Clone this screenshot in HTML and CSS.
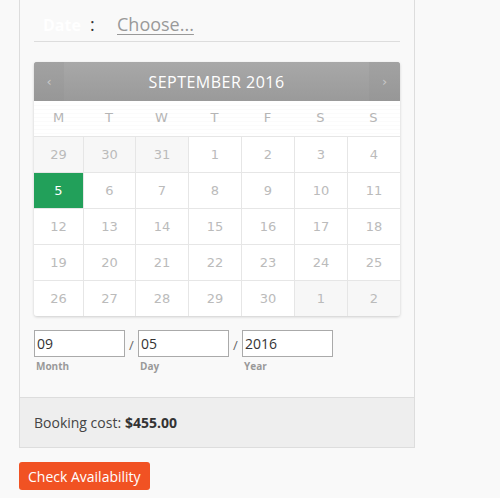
FILE: index.html
```html
<!DOCTYPE html>
<html>
<head>
<meta charset="utf-8">
<link rel="stylesheet" href="styles.css">
</head>
<body>
<div class="card">
  <div class="card-body">
    <div class="date-row">
      <span class="date-label">Date</span>
      <span class="colon">:</span>
      <a class="choose">Choose...</a>
    </div>
    <div class="calendar">
      <div class="cal-head">
        <span class="nav prev">&#8249;</span>
        <span class="title">SEPTEMBER 2016</span>
        <span class="nav next">&#8250;</span>
      </div>
      <div class="dow">
        <span>M</span><span>T</span><span>W</span><span>T</span><span>F</span><span>S</span><span>S</span>
      </div>
      <div class="days">
        <span class="other">29</span><span class="other">30</span><span class="other">31</span><span>1</span><span>2</span><span>3</span><span>4</span>
        <span class="sel">5</span><span>6</span><span>7</span><span>8</span><span>9</span><span>10</span><span>11</span>
        <span>12</span><span>13</span><span>14</span><span>15</span><span>16</span><span>17</span><span>18</span>
        <span>19</span><span>20</span><span>21</span><span>22</span><span>23</span><span>24</span><span>25</span>
        <span>26</span><span>27</span><span>28</span><span>29</span><span>30</span><span class="other">1</span><span class="other">2</span>
      </div>
    </div>
    <div class="inputs">
      <div class="field"><input type="text" value="09"><label>Month</label></div>
      <span class="slash">/</span>
      <div class="field"><input type="text" value="05"><label>Day</label></div>
      <span class="slash">/</span>
      <div class="field"><input type="text" value="2016"><label>Year</label></div>
    </div>
  </div>
  <div class="cost">Booking cost: <strong>$455.00</strong></div>
</div>
<button class="check">Check Availability</button>
</body>
</html>
```
FILE: styles.css
```css
html, body {
  margin: 0;
  padding: 0;
  background: #f9f9f9;
  font-family: "Open Sans", sans-serif;
}
.card {
  margin-left: 19px;
  width: 394px;
  border: 1px solid #dddddd;
  border-top: none;
  background: #f9f9f9;
}
.card-body {
  padding: 0 14px 24px;
}
.date-row {
  display: flex;
  align-items: baseline;
  height: 42px;
  box-sizing: border-box;
  padding: 12px 0 0 9px;
  border-bottom: 1px solid #dddddd;
}
.date-label {
  color: #ffffff;
  font-weight: bold;
  font-size: 16px;
  width: 47px;
}
.colon {
  color: #333;
  font-size: 18px;
  width: 27px;
}
.choose {
  color: #999999;
  font-size: 18px;
  text-decoration: underline;
  text-underline-offset: 3px;
}
.calendar {
  margin-top: 20px;
  background: #fff;
  border-radius: 3px;
  overflow: hidden;
  box-shadow: 0 1px 3px rgba(0,0,0,0.18);
  font-family: "DejaVu Sans", Verdana, sans-serif;
}
.cal-head {
  display: flex;
  height: 39px;
  align-items: stretch;
  background: linear-gradient(#a8a8a8, #9a9a9a);
  border-bottom: 1px solid #ffffff;
}
.nav {
  width: 30px;
  display: flex;
  align-items: center;
  justify-content: center;
  color: #c8c8c8;
  font-size: 13px;
  background: linear-gradient(#a2a2a2, #979797);
}
.next { width: 31px; }
.title {
  flex: 1;
  display: flex;
  align-items: center;
  justify-content: center;
  color: #ffffff;
  font-family: "Open Sans", sans-serif;
  font-size: 16px;
  font-weight: normal;
  letter-spacing: 0.5px;
}
.dow {
  display: grid;
  grid-template-columns: 49px 52px repeat(5, 1fr);
  height: 34px;
  background: repeating-linear-gradient(#ffffff 0, #ffffff 3px, #fbfbfb 3px, #fbfbfb 4px);
}
.dow span {
  display: flex;
  align-items: center;
  justify-content: center;
  color: #b5b5b5;
  font-size: 13px;
  padding-bottom: 4px;
}
.days {
  display: grid;
  grid-template-columns: 49px 51px repeat(5, 1fr);
  grid-auto-rows: 35px;
  gap: 1px;
  background: #e6e6e6;
  border-top: 1px solid #e6e6e6;
}
.days span {
  display: flex;
  align-items: center;
  justify-content: center;
  background: #ffffff;
  color: #bbbbbb;
  font-size: 13px;
}
.days span.other {
  background: #f7f7f7;
}
.days span.sel {
  background: #22a05a;
  color: #ffffff;
}
.inputs {
  display: flex;
  margin-top: 14px;
  align-items: flex-start;
}
.field {
  display: flex;
  flex-direction: column;
}
.field input {
  width: 91px;
  height: 27px;
  box-sizing: border-box;
  border: 1px solid #aaaaaa;
  background: #ffffff;
  font-family: "Open Sans", sans-serif;
  font-size: 14px;
  color: #333;
  padding: 0 2px;
  margin: 0;
  outline: none;
}
.field label {
  font-size: 10px;
  font-weight: bold;
  color: #999999;
  margin-top: 2px;
  padding-left: 2px;
}
.slash {
  width: 13px;
  text-align: center;
  color: #666;
  font-size: 13px;
  line-height: 30px;
}
.cost {
  height: 50px;
  box-sizing: border-box;
  border-top: 1px solid #dddddd;
  background: #eeeeee;
  padding: 0 14px;
  display: flex;
  align-items: center;
  gap: 4px;
  font-size: 14px;
  color: #444;
}
.cost strong {
  color: #333;
}
.check {
  margin: 14px 0 0 19px;
  height: 28px;
  padding: 0 9px;
  border: none;
  border-radius: 3px;
  background: #f15223;
  color: #ffffff;
  font-family: "Open Sans", sans-serif;
  font-size: 14px;
}
```
